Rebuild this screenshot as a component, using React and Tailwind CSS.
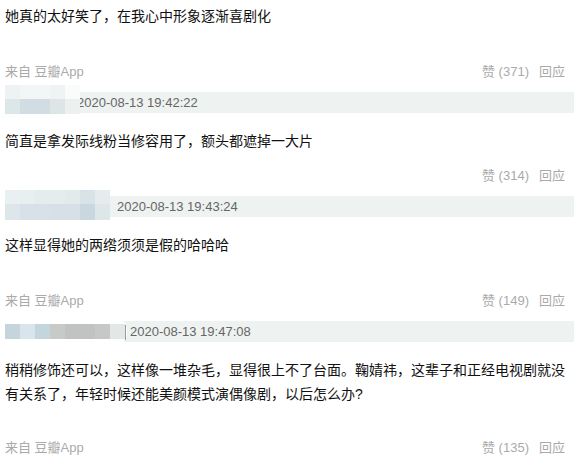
import React from "react";

const font = { fontFamily: '"Liberation Sans", "Noto Sans CJK SC", sans-serif' };

function Mosaic({ rows, blockW, className }) {
  return (
    <div className={className}>
      {rows.map((row, i) => (
        <div key={i} className="flex" style={{ height: row.h }}>
          {row.c.map((c, j) => (
            <div key={j} style={{ width: blockW, background: c }} />
          ))}
        </div>
      ))}
    </div>
  );
}

function Bar({ time, children, pl }) {
  return (
    <div className="relative h-[21px] bg-[#eef3f1] flex items-center">
      {children}
      <span className={`text-[13px] leading-none text-[#666] ${pl}`}>{time}</span>
    </div>
  );
}

function Footer({ source, likes, mt }) {
  return (
    <div className={`flex justify-between items-center h-[20px] text-[13px] text-[#aaa] pr-[9px] mb-[10px] ${mt}`}>
      <span>{source ? "来自 豆瓣App" : ""}</span>
      <span className="flex gap-[10px]">
        <span>赞 ({likes})</span>
        <span>回应</span>
      </span>
    </div>
  );
}

export default function App() {
  return (
    <div className="w-[574px] h-[465px] overflow-hidden bg-white pl-[5px] pt-[4px]" style={font}>
      <p className="text-[14px] leading-[24px] text-[#111]">她真的太好笑了，在我心中形象逐渐喜剧化</p>
      <Footer source likes="371" mt="mt-[34px]" />

      <Bar time="2020-08-13 19:42:22" pl="pl-[72px]">
        <div className="absolute left-0 top-[-7px] w-[75px] h-[29px] bg-white rounded-r-[14px]">
          <Mosaic
            blockW="15px"
            rows={[
              { h: "14px", c: ["#eef2f3", "#f3f6f6", "#f3f6f6", "#f0f3f3", "#fafbfb"] },
              { h: "15px", c: ["#dde6e8", "#d1dde2", "#d1dde2", "#dde5e7", "#ecf0ee"] },
            ]}
          />
        </div>
      </Bar>
      <p className="mt-[16px] text-[14px] leading-[24px] text-[#111]">简直是拿发际线粉当修容用了，额头都遮掉一大片</p>
      <Footer likes="314" mt="mt-[13px]" />

      <Bar time="2020-08-13 19:43:24" pl="pl-[112px]">
        <div className="absolute left-0 top-[-6px] w-[110px] h-[30px] [clip-path:polygon(0_0,100%_0,104%_50%,100%_100%,0_100%)]">
          <Mosaic
            blockW="15px"
            rows={[
              { h: "14px", c: ["#eaf0f1", "#e8eff0", "#e5eced", "#e5eced", "#e2eaec", "#d8e3e8", "#e4ecee"] },
              { h: "16px", c: ["#dde6ea", "#d7e1e7", "#d7e1e7", "#d6e0e6", "#d6e0e6", "#c9d8df", "#dde6e9"] },
            ]}
          />
        </div>
      </Bar>
      <p className="mt-[16px] text-[14px] leading-[24px] text-[#111]">这样显得她的两绺须须是假的哈哈哈</p>
      <Footer source likes="149" mt="mt-[34px]" />

      <Bar time="2020-08-13 19:47:08" pl="pl-[125px]">
        <div className="absolute left-0 top-[-3px] w-[122px] h-[27px] bg-white rounded-r-[12px] flex items-center">
          <Mosaic
            blockW="15px"
            rows={[{ h: "15px", c: ["#c5d5dc", "#d8e5ea", "#c4d6dd", "#c8cac8", "#c0c3c1", "#c0c3c1", "#c5c8c6", "#e3e8e7"] }]}
          />
        </div>
        <div className="absolute left-[120px] top-[4px] w-px h-[15px] bg-[#999]" />
      </Bar>
      <p className="mt-[16px] text-[14px] leading-[24px] text-[#111] pr-[4px]">
        稍稍修饰还可以，这样像一堆杂毛，显得很上不了台面。鞠婧祎，这辈子和正经电视剧就没有关系了，年轻时候还能美颜模式演偶像剧，以后怎么办?
      </p>
      <Footer source likes="135" mt="mt-[32px]" />
    </div>
  );
}
